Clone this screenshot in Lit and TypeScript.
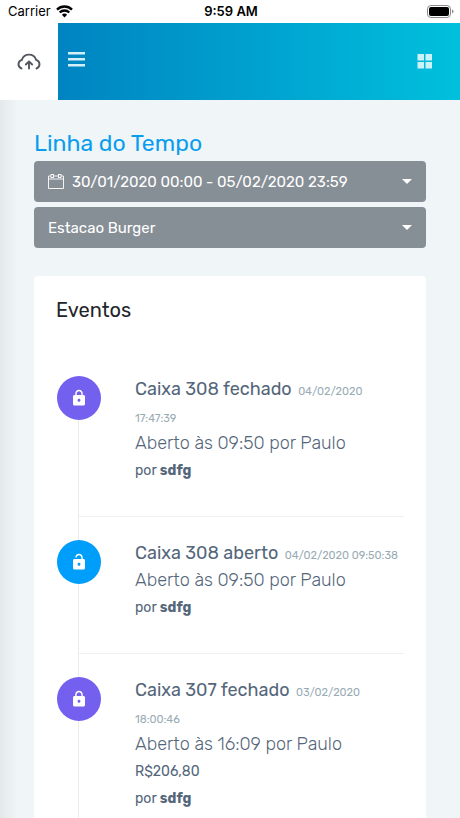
import { LitElement, html, css, svg, nothing } from "lit";
import { customElement, property, state } from "lit/decorators.js";
import { classMap } from "lit/directives/class-map.js";

interface TimelineEvent {
  title: string;
  date: string;
  time: string;
  detail: string;
  amount?: string;
  user: string;
  open: boolean;
}

const EVENTS: TimelineEvent[] = [
  { title: "Caixa 308 fechado", date: "04/02/2020", time: "17:47:39", detail: "Aberto às 09:50 por Paulo", user: "sdfg", open: false },
  { title: "Caixa 308 aberto", date: "04/02/2020", time: "09:50:38", detail: "Aberto às 09:50 por Paulo", user: "sdfg", open: true },
  { title: "Caixa 307 fechado", date: "03/02/2020", time: "18:00:46", detail: "Aberto às 16:09 por Paulo", amount: "R$206,80", user: "sdfg", open: false },
];

const LOCK_CLOSED = svg`<path d="M18 8h-1V6c0-2.76-2.24-5-5-5S7 3.24 7 6v2H6c-1.1 0-2 .9-2 2v10c0 1.1.9 2 2 2h12c1.1 0 2-.9 2-2V10c0-1.1-.9-2-2-2zm-6 9c-1.1 0-2-.9-2-2s.9-2 2-2 2 .9 2 2-.9 2-2 2zm3.1-9H8.9V6c0-1.71 1.39-3.1 3.1-3.1s3.1 1.39 3.1 3.1v2z"/>`;
const LOCK_OPEN = svg`<path fill-rule="evenodd" d="M18 8h-1V6c0-2.76-2.24-5-5-5S7 3.24 7 6h1.9c0-1.71 1.39-3.1 3.1-3.1s3.1 1.39 3.1 3.1v2H6c-1.1 0-2 .9-2 2v10c0 1.1.9 2 2 2h12c1.1 0 2-.9 2-2V10c0-1.1-.9-2-2-2zM12 17c-1.1 0-2-.9-2-2s.9-2 2-2 2 .9 2 2-.9 2-2 2z"/>`;

@customElement("status-bar")
class StatusBar extends LitElement {
  static styles = css`
    :host {
      display: grid;
      grid-template-columns: 1fr auto 1fr;
      align-items: center;
      height: 23px;
      padding: 0 6px 0 8px;
      background: #fff;
      color: #000;
      font-family: Inter, "Liberation Sans", sans-serif;
      font-size: 13px;
      line-height: 23px;
    }
    .carrier {
      display: flex;
      align-items: center;
      gap: 5px;
    }
    .clock {
      font-weight: 600;
    }
    .battery {
      justify-self: end;
    }
    svg {
      display: block;
    }
  `;

  render() {
    return html`
      <span class="carrier">
        Carrier
        <svg width="17" height="13" viewBox="0 0 17 13" fill="none" stroke="#000" aria-hidden="true">
          <path d="M1 4.600a10.800 10.800 0 0 1 15 0" stroke-width="2.400" />
          <path d="M3.700 7.500a6.800 6.800 0 0 1 9.600 0" stroke-width="2.300" />
          <path d="M8.500 12.400 5.900 9.700a3.700 3.700 0 0 1 5.200 0z" fill="#000" stroke="none" />
        </svg>
      </span>
      <span class="clock">9:59 AM</span>
      <svg class="battery" width="27" height="13" viewBox="0 0 27 13" aria-hidden="true">
        <rect x=".5" y=".5" width="23" height="12" rx="3.400" fill="none" stroke="#8c8c8c" />
        <rect x="2" y="2" width="20" height="9" rx="2" />
        <path d="M25 4.600c1 .3 1.500 1 1.500 1.900s-.5 1.600-1.500 1.900z" fill="#8c8c8c" />
      </svg>
    `;
  }
}

@customElement("app-header")
class AppHeader extends LitElement {
  static styles = css`
    :host {
      display: flex;
      height: 77px;
      background: linear-gradient(to right, #007bbd, #00c0dd);
    }
    .logo {
      display: grid;
      place-items: center;
      width: 58px;
      background: #fff;
    }
    .bar {
      display: flex;
      flex: 1;
      align-items: center;
      justify-content: space-between;
      padding: 0 26px 0 8px;
    }
    button {
      display: block;
      border: 0;
      padding: 0;
      background: none;
      cursor: pointer;
    }
    .menu {
      padding-bottom: 4px;
    }
    svg {
      display: block;
    }
  `;

  render() {
    return html`
      <a class="logo" href="#" aria-label="Início">
        <svg width="26" height="20" viewBox="0 0 26 20" fill="none" stroke="#54585e" stroke-width="1.900" stroke-linecap="round" stroke-linejoin="round">
          <path d="M5.500 16.500A4.500 4.500 0 0 1 5.900 7.900 7.400 7.400 0 0 1 20.100 7.900 4.500 4.500 0 0 1 20.500 16.500" />
          <path d="M13 16.500v-6.800M9.900 12.500 13 9.400l3.100 3.100" />
        </svg>
      </a>
      <div class="bar">
        <button class="menu" aria-label="Menu">
          <svg width="20" height="15" viewBox="0 0 20 15" fill="#d3effa">
            <path d="M2 0h17v2.400H2zM2 6h17v2.400H2zM2 12h17v2.400H2z" />
          </svg>
        </button>
        <button aria-label="Aplicativos">
          <svg width="18" height="15" viewBox="0 0 18 15" fill="#ccf2f8">
            <path d="M1.500 0H8v6.500H1.500zM9.500 0H16v6.500H9.500zM1.500 8H8v6.500H1.500zM9.500 8H16v6.500H9.500z" />
          </svg>
        </button>
      </div>
    `;
  }
}

@customElement("timeline-item")
class TimelineItem extends LitElement {
  @property({ attribute: false }) event!: TimelineEvent;

  static styles = css`
    :host {
      display: flex;
      align-items: flex-start;
      gap: 34px;
      padding: 23px 4px 32px 0;
      border-bottom: 1px solid #eff0f2;
      color: #54667a;
    }
    .badge {
      display: grid;
      place-items: center;
      flex: none;
      width: 44px;
      height: 44px;
      margin-left: -22px;
      border-radius: 50%;
      background: #7460ee;
      fill: #fff;
    }
    .badge.open {
      background: #009efb;
    }
    .body {
      flex: 1;
      min-width: 0;
      font-size: 14px;
      font-weight: 400;
      line-height: 27px;
    }
    h3,
    p {
      margin: 0;
      font-weight: inherit;
    }
    h3 {
      font-size: 18px;
    }
    time {
      margin-left: 2px;
      color: #99abb4;
      font-size: 11px;
      line-height: 1;
    }
    .detail {
      font-size: 18px;
      font-weight: 300;
    }
    b {
      font-weight: 700;
    }
  `;

  render() {
    const e = this.event;
    return html`
      <span class=${classMap({ badge: true, open: e.open })}>
        <svg width="18" height="18" viewBox="0 0 24 24" aria-hidden="true">${e.open ? LOCK_OPEN : LOCK_CLOSED}</svg>
      </span>
      <div class="body">
        <h3>${e.title} <time>${e.date} ${e.time}</time></h3>
        <p class="detail">${e.detail}</p>
        ${e.amount ? html`<p>${e.amount}</p>` : nothing}
        <p>por <b>${e.user}</b></p>
      </div>
    `;
  }
}

@customElement("app-root")
class AppRoot extends LitElement {
  @state() private events = EVENTS;

  static styles = css`
    :host {
      display: flex;
      flex-direction: column;
      height: 100vh;
      overflow: hidden;
      font-family: Rubik, Inter, "Liberation Sans", sans-serif;
    }
    main {
      flex: 1;
      min-height: 0;
      overflow-y: auto;
      scrollbar-width: none;
      box-sizing: border-box;
      padding: 28px 34px;
      background: linear-gradient(to right, #e4e8e9, #f0f6f8 18px);
    }
    h1 {
      margin: 0 0 2px;
      color: #099dee;
      font-size: 23px;
      font-weight: 400;
      line-height: 31px;
    }
    .filters {
      display: grid;
      gap: 5px;
    }
    .filter {
      display: flex;
      align-items: center;
      position: relative;
      height: 41px;
      border-radius: 4px;
      background: #868e96;
      color: #fff;
    }
    .filter button,
    .filter select {
      display: flex;
      align-items: center;
      gap: 8px;
      width: 100%;
      height: 100%;
      border: 0;
      padding: 0 14px;
      background: none;
      color: inherit;
      font: inherit;
      font-size: 15px;
      appearance: none;
      cursor: pointer;
    }
    .caret {
      position: absolute;
      right: 14px;
      pointer-events: none;
      border: 5px solid transparent;
      border-top-color: #fff;
      border-bottom: 0;
    }
    .card {
      margin-top: 28px;
      padding: 22px;
      border-radius: 4px;
      background: #fff;
    }
    h2 {
      margin: 0;
      color: #212529;
      font-size: 20px;
      font-weight: 400;
      line-height: 24px;
    }
    .timeline {
      margin: 54px 0 0 22px;
      padding: 0;
      border-left: 1px solid #e9ecef;
      list-style: none;
    }
    li:first-child timeline-item {
      padding-top: 0;
    }
  `;

  render() {
    return html`
      <status-bar></status-bar>
      <app-header></app-header>
      <main>
        <h1>Linha do Tempo</h1>
        <div class="filters">
          <div class="filter">
            <button aria-haspopup="dialog">
              <svg width="16" height="16" viewBox="0 0 16 16" fill="none" stroke="#fff" stroke-width=".9" aria-hidden="true">
                <path d="M3 2H.5v12.500h15V2H13M5.500 2h5M.5 5h15" />
                <rect x="3" y=".5" width="2.500" height="3" />
                <rect x="10.500" y=".5" width="2.500" height="3" />
              </svg>
              30/01/2020 00:00 - 05/02/2020 23:59
            </button>
            <span class="caret"></span>
          </div>
          <div class="filter">
            <select aria-label="Loja">
              <option>Estacao Burger</option>
            </select>
            <span class="caret"></span>
          </div>
        </div>
        <section class="card">
          <h2>Eventos</h2>
          <ul class="timeline">
            ${this.events.map((event) => html`<li><timeline-item .event=${event}></timeline-item></li>`)}
          </ul>
        </section>
      </main>
    `;
  }
}
